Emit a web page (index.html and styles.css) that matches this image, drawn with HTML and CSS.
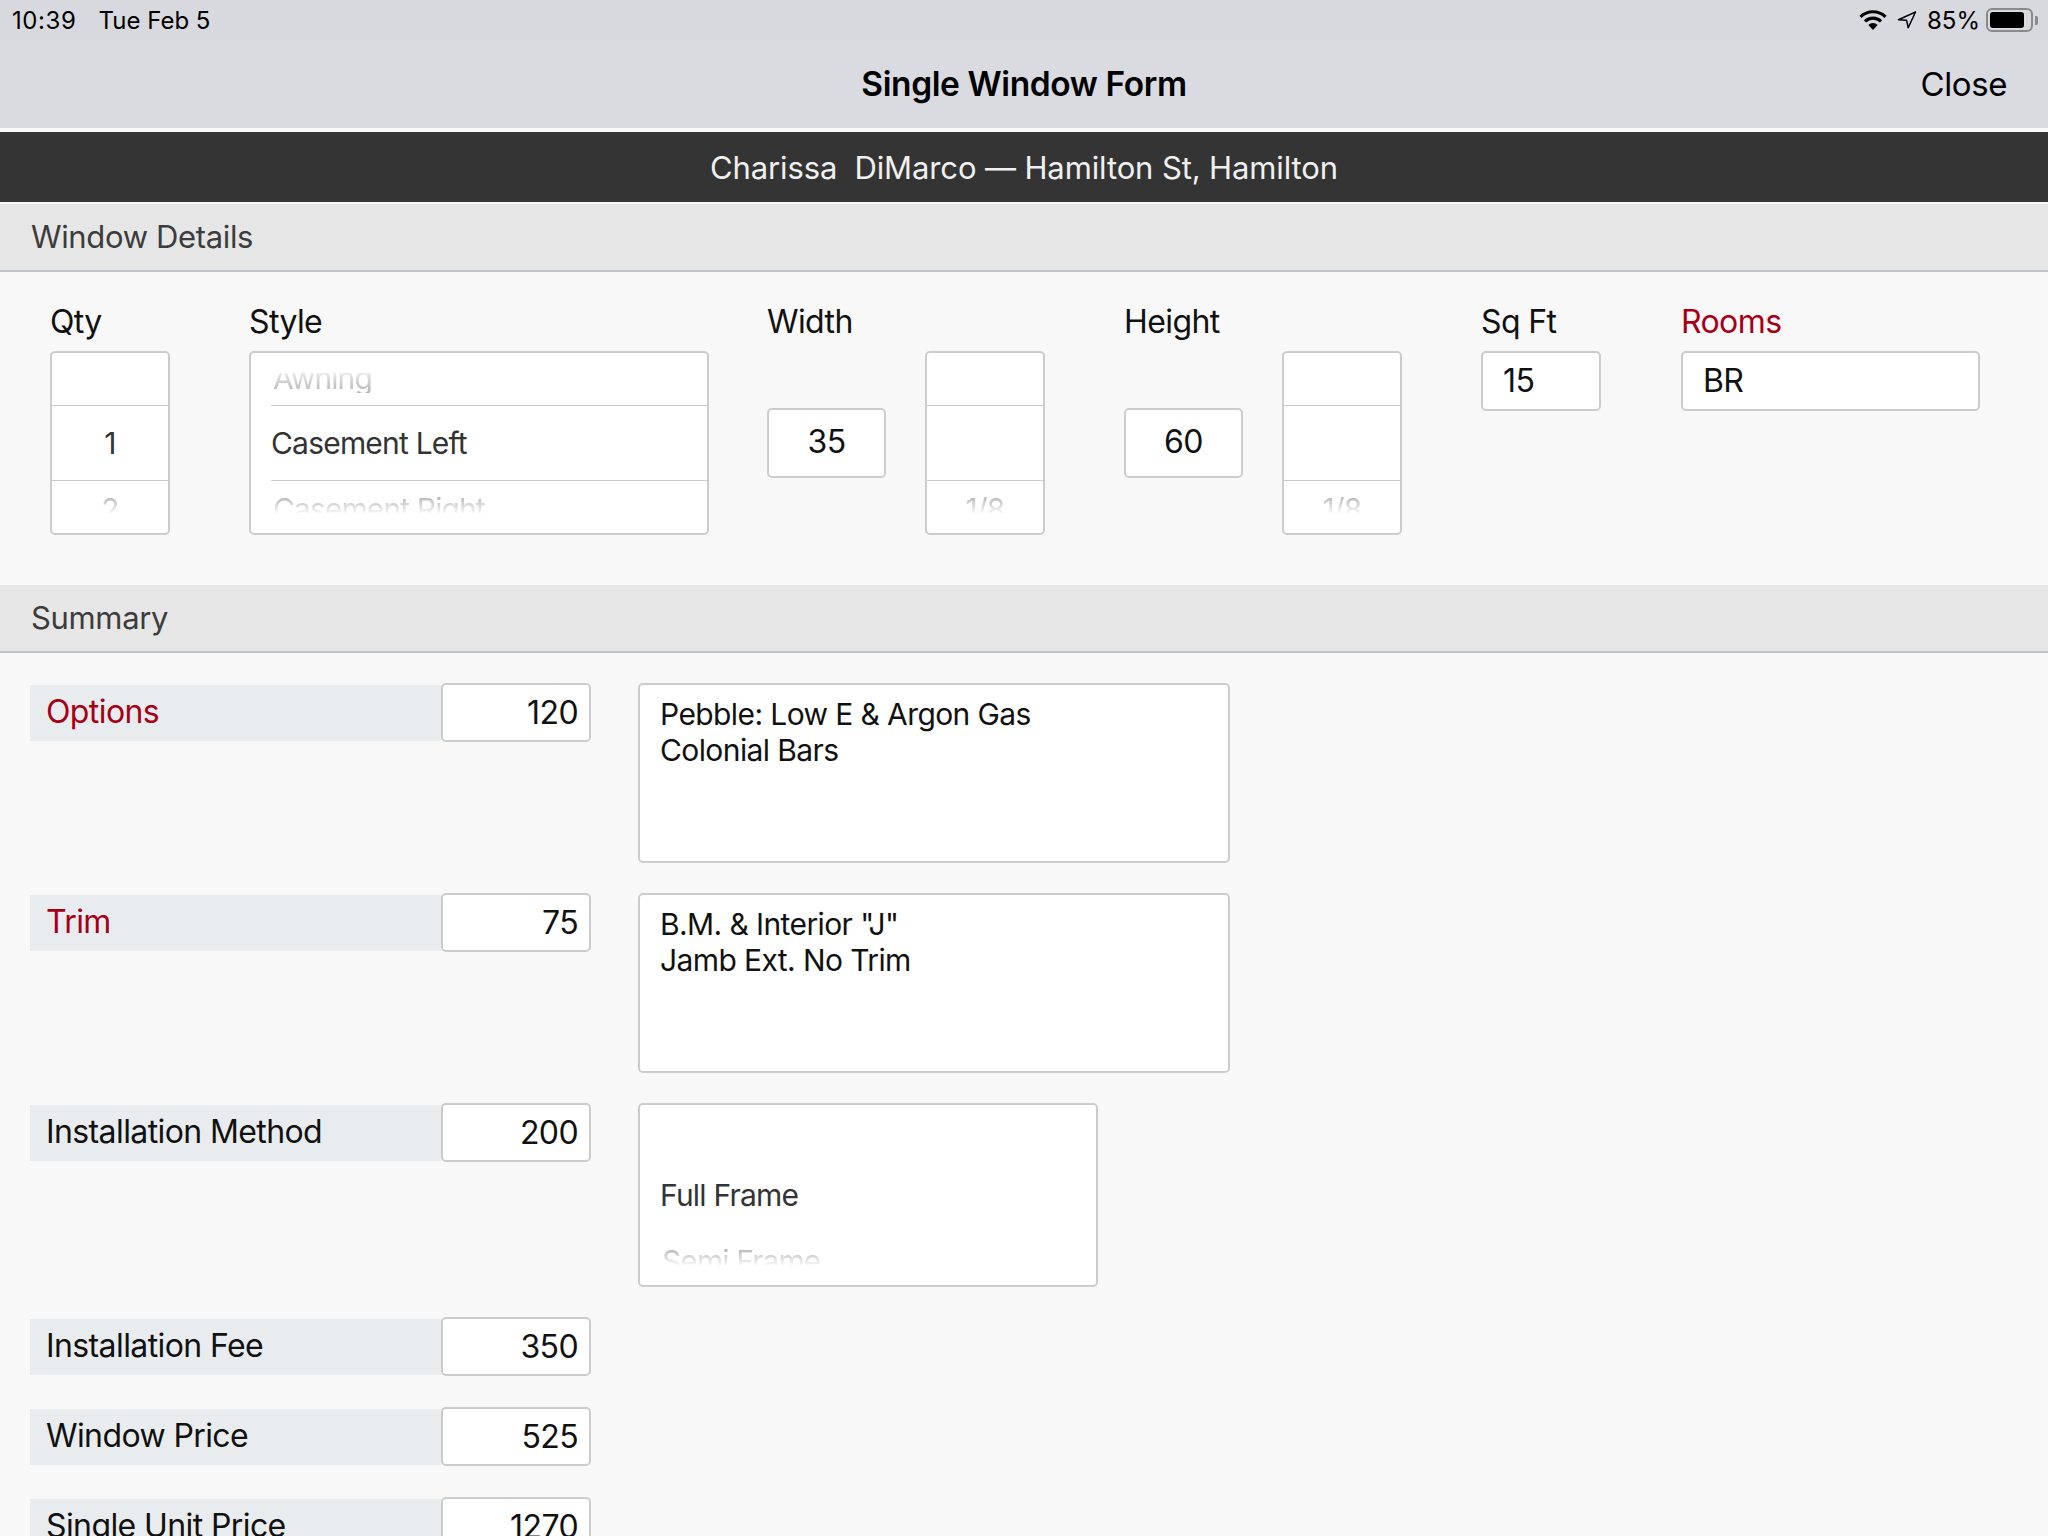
FILE: index.html
```html
<!DOCTYPE html>
<html lang="en">

<head>
  <meta charset="utf-8">
  <title>Single Window Form</title>
  <link rel="stylesheet" href="styles.css">
</head>

<body>
  <div class="topBar">
    <div class="status">
      <span class="clock">10:39</span>
      <span class="date">Tue Feb 5</span>
      <div class="statusRight">
        <svg class="wifi" width="28" height="20" viewBox="0 0 28 20">
          <path d="M1.5 6.8 A18 18 0 0 1 26.500 6.800" fill="none" stroke="#000" stroke-width="3.200" />
          <path d="M6 11.400 A11.500 11.500 0 0 1 22 11.400" fill="none" stroke="#000" stroke-width="3.200" />
          <path d="M14 20 L9.300 15 A6.800 6.800 0 0 1 18.700 15 Z" fill="#000" />
        </svg>
        <svg class="arrow" width="20" height="18" viewBox="0 0 20 18">
          <path d="M18.500 1 L1.500 8.700 L9.600 9.300 L11.200 16.800 Z" fill="none" stroke="#000" stroke-width="1.500" stroke-linejoin="round" />
        </svg>
        <span class="battPct">85%</span>
        <div class="battery">
          <div class="battFill"></div>
        </div>
        <div class="battCap"></div>
      </div>
    </div>
    <div class="nav">
      <span></span>
      <span class="navTitle">Single Window Form</span>
      <span class="navClose">Close</span>
    </div>
  </div>

  <div class="customer">Charissa&nbsp; DiMarco — Hamilton St, Hamilton</div>

  <div class="sectionHead sectionFirst">Window Details</div>
  <div class="details">
    <div class="field">
      <div class="fieldLabel">Qty</div>
      <div class="picker">
        <div class="pickRow pickTop"></div>
        <div class="pickRow pickMid center">1</div>
        <div class="pickRow center"><span class="faded fadedBottom">2</span></div>
      </div>
    </div>
    <div class="field">
      <div class="fieldLabel">Style</div>
      <div class="picker pickerWide">
        <div class="pickRow pickTop"><span class="faded fadedTop">Awning</span></div>
        <div class="pickRow pickMid">Casement Left</div>
        <div class="pickRow"><span class="faded fadedBottom">Casement Right</span></div>
      </div>
    </div>
    <div class="field">
      <div class="fieldLabel">Width</div>
      <div class="measure">
        <div class="box boxTall center">35</div>
        <div class="picker">
          <div class="pickRow pickTop"></div>
          <div class="pickRow pickMid"></div>
          <div class="pickRow center"><span class="faded fadedBottom">1/8</span></div>
        </div>
      </div>
    </div>
    <div class="field">
      <div class="fieldLabel">Height</div>
      <div class="measure">
        <div class="box boxTall center">60</div>
        <div class="picker">
          <div class="pickRow pickTop"></div>
          <div class="pickRow pickMid"></div>
          <div class="pickRow center"><span class="faded fadedBottom">1/8</span></div>
        </div>
      </div>
    </div>
    <div class="field">
      <div class="fieldLabel">Sq Ft</div>
      <div class="box boxSq">15</div>
    </div>
    <div class="field">
      <div class="fieldLabel red">Rooms</div>
      <div class="box boxRooms">BR</div>
    </div>
  </div>

  <div class="sectionHead">Summary</div>
  <div class="summary">
    <div class="sumRow">
      <div class="sumPair">
        <div class="sumLabel red">Options</div>
        <div class="sumValue">120</div>
      </div>
      <div class="note">Pebble: Low E &amp; Argon Gas
Colonial Bars</div>
    </div>
    <div class="sumRow">
      <div class="sumPair">
        <div class="sumLabel red">Trim</div>
        <div class="sumValue">75</div>
      </div>
      <div class="note">B.M. &amp; Interior "J"
Jamb Ext. No Trim</div>
    </div>
    <div class="sumRow">
      <div class="sumPair">
        <div class="sumLabel">Installation Method</div>
        <div class="sumValue">200</div>
      </div>
      <div class="picker pickerMethod">
        <div class="methodRow methodTop"></div>
        <div class="methodRow methodMid">Full Frame</div>
        <div class="methodRow"><span class="faded fadedBottom">Semi Frame</span></div>
      </div>
    </div>
    <div class="sumRow">
      <div class="sumPair">
        <div class="sumLabel">Installation Fee</div>
        <div class="sumValue">350</div>
      </div>
    </div>
    <div class="sumRow">
      <div class="sumPair">
        <div class="sumLabel">Window Price</div>
        <div class="sumValue">525</div>
      </div>
    </div>
    <div class="sumRow">
      <div class="sumPair">
        <div class="sumLabel">Single Unit Price</div>
        <div class="sumValue">1270</div>
      </div>
    </div>
  </div>
</body>

</html>
```

FILE: styles.css
```css
* {
  box-sizing: border-box;
  font-family: Inter, "Liberation Sans", sans-serif;
}

body {
  margin: 0;
  height: 1536px;
  overflow: hidden;
  background-color: #f8f8f8;
  color: #111;
  font-size: 32px;
  letter-spacing: -0.6px;
}

.red {
  color: #a50016;
}

.center {
  justify-content: center;
}

/* top bar */
.topBar {
  height: 128px;
  background-color: #d9dbe0;
}

.status {
  height: 40px;
  display: flex;
  align-items: center;
  padding: 0 10px 0 12px;
  background-color: #d8d9de;
  font-size: 24px;
  letter-spacing: 0;
  color: #000;
}

.clock {
  letter-spacing: .6px;
}

.date {
  margin-left: 22px;
}

.statusRight {
  margin-left: auto;
  display: flex;
  align-items: center;
}

.arrow {
  margin-left: 10px;
}

.battPct {
  margin-left: 10px;
}

.battery {
  margin-left: 6px;
  width: 47px;
  height: 24px;
  border: 2px solid #8a8a8e;
  border-radius: 6px;
  padding: 2px;
}

.battFill {
  width: 34px;
  height: 16px;
  background-color: #000;
  border-radius: 3px;
}

.battCap {
  margin-left: 2px;
  width: 3px;
  height: 9px;
  background-color: #8a8a8e;
  border-radius: 0 2px 2px 0;
}

.nav {
  height: 88px;
  display: grid;
  grid-template-columns: 1fr auto 1fr;
  align-items: center;
  padding: 0 41px;
  color: #000;
}

.navTitle {
  font-size: 33.500px;
  font-weight: 600;
  letter-spacing: -0.4px;
}

.navClose {
  justify-self: end;
  font-size: 33px;
  letter-spacing: -0.4px;
}

/* customer strip */
.customer {
  margin-top: 4px;
  height: 70px;
  background-color: #343434;
  color: #f0f0f0;
  display: flex;
  align-items: center;
  justify-content: center;
  font-size: 31px;
  letter-spacing: -0.12px;
}

.sectionHead {
  height: 68px;
  background-color: #e6e6e6;
  border-bottom: 2px solid #c0c4cc;
  display: flex;
  align-items: center;
  padding: 0 0 2px 31px;
  color: #3c3c3c;
  font-size: 31px;
  letter-spacing: -0.35px;
}

.sectionFirst {
  margin-top: 2px;
}

/* window details */
.details {
  height: 313px;
  display: grid;
  grid-template-columns: 199px 518px 357px 357px 200px auto;
  padding: 30px 0 0 50px;
}

.fieldLabel {
  height: 49px;
  line-height: 40px;
}

.picker {
  width: 120px;
  height: 184px;
  background-color: #fff;
  border: 2px solid #ccc;
  border-radius: 5px;
  display: flex;
  flex-direction: column;
  overflow: hidden;
  color: #333;
  font-size: 30px;
  letter-spacing: -0.8px;
}

.pickerWide {
  width: 460px;
}

.pickRow {
  flex: 1;
  display: flex;
  align-items: flex-start;
  padding-left: 20px;
}

.pickRow.center {
  padding-left: 0;
}

.pickTop {
  flex: none;
  height: 52px;
}

.pickMid {
  flex: none;
  height: 76px;
  align-items: center;
  border-top: 1px solid #ccc;
  border-bottom: 1px solid #ccc;
}

.pickerWide .pickMid {
  border: 0;
  background-image: linear-gradient(#ccc, #ccc), linear-gradient(#ccc, #ccc);
  background-size: 100% 1px, 100% 1px;
  background-position: 20px 0, 20px 100%;
  background-repeat: no-repeat;
}

.faded {
  display: block;
  overflow: hidden;
  color: #b4b4b4;
  margin-left: 2px;
  letter-spacing: -0.9px;
}

.center .faded {
  margin-left: 0;
}

.fadedTop {
  margin-top: 20px;
  height: 20px;
  line-height: 11px;
  -webkit-mask-image: linear-gradient(rgba(0, 0, 0, .3), #000);
  mask-image: linear-gradient(rgba(0, 0, 0, .3), #000);
}

.fadedBottom {
  margin-top: 15px;
  height: 17px;
  line-height: 26px;
  -webkit-mask-image: linear-gradient(#000, rgba(0, 0, 0, .1));
  mask-image: linear-gradient(#000, rgba(0, 0, 0, .1));
}

.measure {
  display: flex;
  align-items: center;
  gap: 39px;
}

.box {
  background-color: #fff;
  border: 2px solid #ccc;
  border-radius: 5px;
  display: flex;
  align-items: center;
  height: 60px;
  padding: 0 0 2px 20px;
}

.box.center {
  padding-left: 0;
}

.boxTall {
  width: 119px;
  height: 70px;
  padding-bottom: 4px;
}

.boxSq {
  width: 120px;
}

.boxRooms {
  width: 299px;
}

/* summary */
.summary {
  padding: 30px 0 0 30px;
  display: flex;
  flex-direction: column;
  gap: 30px;
}

.sumRow {
  display: flex;
  align-items: flex-start;
  gap: 47px;
}

.sumPair {
  display: flex;
  align-items: flex-start;
  height: 60px;
}

.sumLabel {
  width: 411px;
  height: 56px;
  margin-top: 2px;
  background-color: #e9ecef;
  display: flex;
  align-items: center;
  padding: 0 0 3px 16px;
}

.sumValue {
  width: 150px;
  height: 59px;
  background-color: #fff;
  border: 2px solid #ccc;
  border-radius: 5px;
  display: flex;
  align-items: center;
  justify-content: flex-end;
  padding: 0 11px 1px 0;
}

.note {
  width: 592px;
  height: 180px;
  background-color: #fff;
  border: 2px solid #ccc;
  border-radius: 5px;
  padding: 11px 20px;
  font-size: 30px;
  letter-spacing: -0.6px;
  line-height: 36px;
  white-space: pre-line;
}

.pickerMethod {
  width: 460px;
}

.methodRow {
  flex: none;
  height: 53px;
  padding-left: 20px;
  display: flex;
  align-items: center;
}

.methodTop {
  height: 52px;
}

.methodMid {
  height: 75px;
}

.methodRow .faded {
  align-self: flex-start;
  margin-top: 16px;
}
```
